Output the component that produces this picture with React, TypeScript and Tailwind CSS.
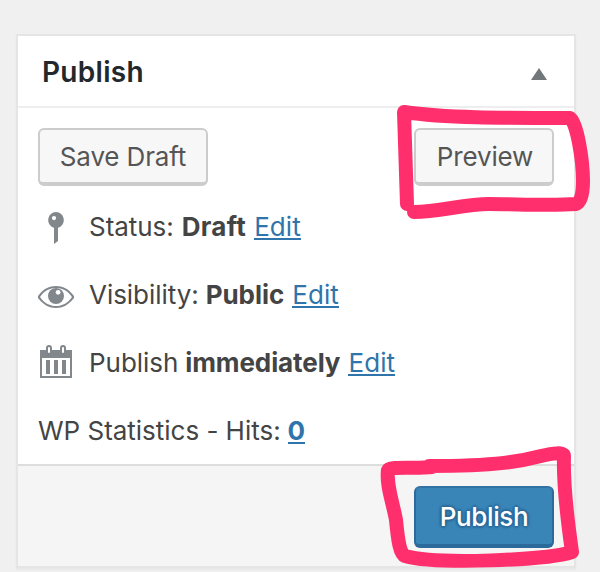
import type { ReactNode } from 'react';

function KeyIcon() {
  return (
    <svg width="36" height="40" viewBox="0 -1 36 40" fill="#82878c" aria-hidden="true">
      <path fillRule="evenodd" d="M18 4a8 8 0 0 1 2 15.7V33l-4 3V19.700A8 8 0 0 1 18 4Zm-2 4a2.100 2.100 0 1 0 0 4.200A2.100 2.100 0 0 0 16 8Z" />
    </svg>
  );
}

function EyeIcon() {
  return (
    <svg width="36" height="40" viewBox="0 -1 36 40" aria-hidden="true">
      <path d="M-.8 21C5 13 11 10 18 10s13 3 18.800 11C31 29 25 32 18 32S5 29-.8 21ZM2 21c4.500 6.500 10 9 16 9s11.500-2.500 16-9c-4.500-6.500-10-9-16-9S6.500 14.500 2 21Z" fill="#82878c" fillRule="evenodd" />
      <circle cx="18" cy="20" r="8" fill="#82878c" />
      <circle cx="20.100" cy="16.300" r="2.400" fill="#fff" />
    </svg>
  );
}

function CalendarIcon() {
  return (
    <svg width="36" height="40" viewBox="0 0 36 40" aria-hidden="true">
      <path fill="#82878c" fillRule="evenodd" d="M2 7h32v28H2ZM4 15v18h28V15Z" />
      <path fill="#82878c" d="M8 17h4v14H8zM16 17h4v14h-4zM24 17h4v14h-4z" />
      <rect x="9" y="3" width="4" height="8" rx="2" fill="#fff" stroke="#82878c" strokeWidth="2" />
      <rect x="23" y="3" width="4" height="8" rx="2" fill="#fff" stroke="#82878c" strokeWidth="2" />
    </svg>
  );
}

function Edit() {
  return (
    <a className="mb-[2px] ml-[8px] h-[28px] border-b-2 border-[#2f75ab] leading-[29px] tracking-[0.1px] text-[#2f75ab]">Edit</a>
  );
}

function Row({ icon, label, value, valueClass }: { icon: ReactNode; label: string; value: string; valueClass: string }) {
  return (
    <div className="flex h-[68px] shrink-0 items-center">
      <div className="w-[51px]">{icon}</div>
      <div className="flex items-center leading-[30px] whitespace-nowrap">
        <span className="tracking-[-0.05px]">{label}</span>
        <b className={valueClass}>{value}</b>
        <Edit />
      </div>
    </div>
  );
}

const grayButton =
  'h-[58px] rounded-[6px] border-2 border-b-[4px] border-[#cccccc] bg-[#f7f7f7] text-[#555555] tracking-[-0.15px] flex items-center justify-center pt-px';

export default function App() {
  return (
    <div className="relative h-[572px] w-[600px] overflow-hidden bg-[#f0f0f0] px-4 pt-[34px] font-['Inter','Liberation_Sans',sans-serif] text-[26px] text-[#444444]">
      <section className="flex h-[534px] w-[560px] flex-col border-2 border-[#e5e5e5] bg-white shadow-[0_2px_2px_rgba(0,0,0,0.04)]">
        <header className="flex h-[72px] items-center justify-between border-b-2 border-[#eeeeee] pt-0.5 pr-[27px] pl-6">
          <h2 className="text-[28px] font-semibold tracking-[0.3px] text-[#23282d]">Publish</h2>
          <svg width="16" height="12" viewBox="0 0 16 12" className="mt-1" aria-hidden="true">
            <path d="M8 0 16 12H0Z" fill="#72777c" />
          </svg>
        </header>
        <div className="flex h-[356px] flex-col px-5 pt-5">
          <div className="mb-[7px] flex shrink-0 justify-between">
            <button className={`${grayButton} w-[170px]`}>Save Draft</button>
            <button className={`${grayButton} w-[140px] pl-[2px]`}>Preview</button>
          </div>
          <Row icon={<KeyIcon />} label="Status:" value="Draft" valueClass="ml-[8px] font-bold tracking-[0.3px]" />
          <Row icon={<EyeIcon />} label="Visibility:" value="Public" valueClass="ml-[7px] font-bold tracking-[-0.05px]" />
          <Row icon={<CalendarIcon />} label="Publish" value="immediately" valueClass="ml-[7px] font-bold tracking-[-0.1px]" />
          <div className="flex h-[68px] shrink-0 items-center leading-[30px] whitespace-nowrap">
            <span className="tracking-[-0.02px]">WP Statistics - Hits:</span>
            <a className="mb-[2px] ml-[7px] h-[28px] border-b-2 border-[#2f75ab] leading-[29px] font-bold tracking-[-0.6px] text-[#2f75ab]">0</a>
          </div>
        </div>
        <footer className="flex h-[102px] justify-end border-t-2 border-[#dddddd] bg-[#f5f5f5] pt-5 pr-5">
          <button className="flex h-[62px] w-[140px] items-center justify-center rounded-[6px] border-2 border-b-4 border-[#2b6a9a] border-t-[#3072a4] bg-[#3985b7] font-medium tracking-[-0.4px] text-white [text-shadow:0_-2px_2px_#2b6a9a,2px_0_2px_#2b6a9a,0_2px_2px_#2b6a9a,-2px_0_2px_#2b6a9a]">
            Publish
          </button>
        </footer>
      </section>
      <svg className="pointer-events-none absolute inset-0" width="600" height="572" viewBox="0 0 600 572" fill="none" stroke="#ff2f6d" strokeWidth="14" strokeLinecap="round" strokeLinejoin="round" aria-hidden="true">
        <path d="M407 204 404 112C445 118 500 118 570 118C577 122 583 161 583 181C583 194 581 202 576 204C551 206 516 204 489 204C464 204 439 212 414 212" />
        <path d="M429 466C498 466 522 461 541 456C553 453 564 452 564 456C563 485 568 524 572 552C547 560 437 565 405 556C400 554 398 541 396 520C393 503 386 485 388 470C389 466 417 469 432 467" />
      </svg>
    </div>
  );
}
